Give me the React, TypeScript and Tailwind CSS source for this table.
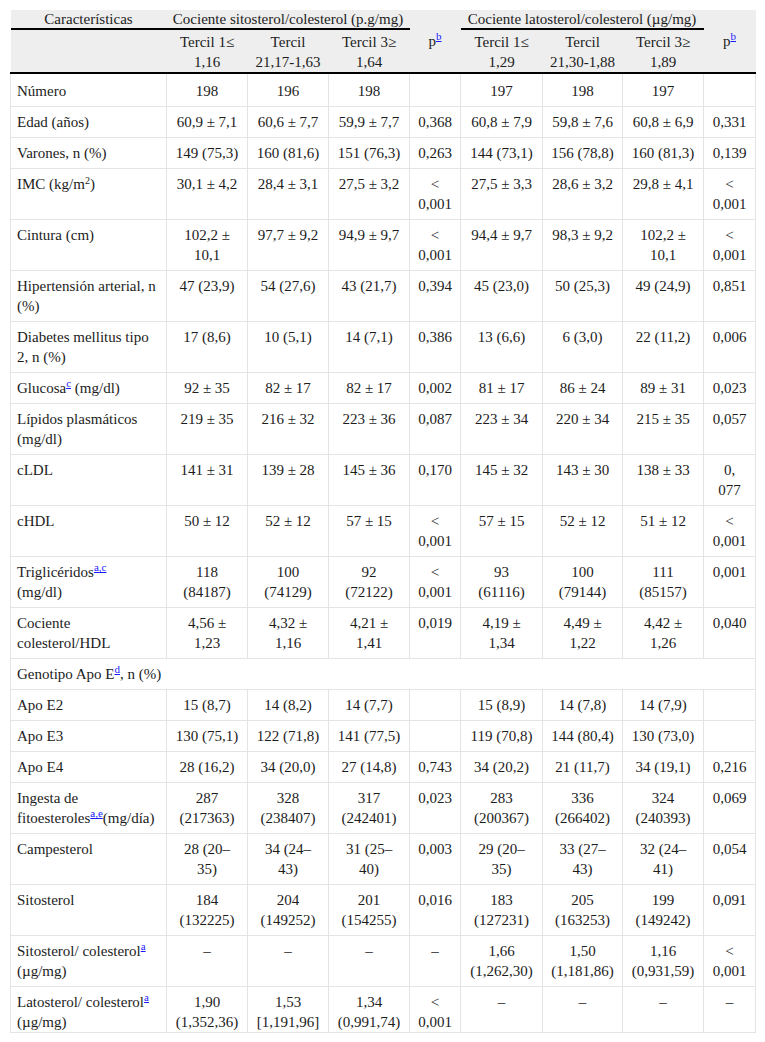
import React from 'react';

type Row = {
  label: React.ReactNode;
  cells?: string[];
  span?: boolean;
};

function Ref({ children }: { children: React.ReactNode }) {
  return (
    <sup>
      <a href="#" className="text-[#1a1aff] underline text-[11px]">
        {children}
      </a>
    </sup>
  );
}

const rows: Row[] = [
  { label: 'Número', cells: ['198', '196', '198', '', '197', '198', '197', ''] },
  { label: 'Edad (años)', cells: ['60,9 ± 7,1', '60,6 ± 7,7', '59,9 ± 7,7', '0,368', '60,8 ± 7,9', '59,8 ± 7,6', '60,8 ± 6,9', '0,331'] },
  { label: 'Varones, n (%)', cells: ['149 (75,3)', '160 (81,6)', '151 (76,3)', '0,263', '144 (73,1)', '156 (78,8)', '160 (81,3)', '0,139'] },
  {
    label: (
      <>
        IMC (kg/m<sup className="text-[10px]">2</sup>)
      </>
    ),
    cells: ['30,1 ± 4,2', '28,4 ± 3,1', '27,5 ± 3,2', '<\n0,001', '27,5 ± 3,3', '28,6 ± 3,2', '29,8 ± 4,1', '<\n0,001'],
  },
  { label: 'Cintura (cm)', cells: ['102,2 ±\n10,1', '97,7 ± 9,2', '94,9 ± 9,7', '<\n0,001', '94,4 ± 9,7', '98,3 ± 9,2', '102,2 ±\n10,1', '<\n0,001'] },
  { label: 'Hipertensión arterial, n\n(%)', cells: ['47 (23,9)', '54 (27,6)', '43 (21,7)', '0,394', '45 (23,0)', '50 (25,3)', '49 (24,9)', '0,851'] },
  { label: 'Diabetes mellitus tipo\n2, n (%)', cells: ['17 (8,6)', '10 (5,1)', '14 (7,1)', '0,386', '13 (6,6)', '6 (3,0)', '22 (11,2)', '0,006'] },
  {
    label: (
      <>
        Glucosa<Ref>c</Ref> (mg/dl)
      </>
    ),
    cells: ['92 ± 35', '82 ± 17', '82 ± 17', '0,002', '81 ± 17', '86 ± 24', '89 ± 31', '0,023'],
  },
  { label: 'Lípidos plasmáticos\n(mg/dl)', cells: ['219 ± 35', '216 ± 32', '223 ± 36', '0,087', '223 ± 34', '220 ± 34', '215 ± 35', '0,057'] },
  { label: 'cLDL', cells: ['141 ± 31', '139 ± 28', '145 ± 36', '0,170', '145 ± 32', '143 ± 30', '138 ± 33', '0,\n077'] },
  { label: 'cHDL', cells: ['50 ± 12', '52 ± 12', '57 ± 15', '<\n0,001', '57 ± 15', '52 ± 12', '51 ± 12', '<\n0,001'] },
  {
    label: (
      <>
        Triglicéridos<Ref>a,c</Ref>
        {'\n'}(mg/dl)
      </>
    ),
    cells: ['118\n(84187)', '100\n(74129)', '92\n(72122)', '<\n0,001', '93\n(61116)', '100\n(79144)', '111\n(85157)', '0,001'],
  },
  { label: 'Cociente\ncolesterol/HDL', cells: ['4,56 ±\n1,23', '4,32 ±\n1,16', '4,21 ±\n1,41', '0,019', '4,19 ±\n1,34', '4,49 ±\n1,22', '4,42 ±\n1,26', '0,040'] },
  {
    label: (
      <>
        Genotipo Apo E<Ref>d</Ref>, n (%)
      </>
    ),
    span: true,
  },
  { label: 'Apo E2', cells: ['15 (8,7)', '14 (8,2)', '14 (7,7)', '', '15 (8,9)', '14 (7,8)', '14 (7,9)', ''] },
  { label: 'Apo E3', cells: ['130 (75,1)', '122 (71,8)', '141 (77,5)', '', '119 (70,8)', '144 (80,4)', '130 (73,0)', ''] },
  { label: 'Apo E4', cells: ['28 (16,2)', '34 (20,0)', '27 (14,8)', '0,743', '34 (20,2)', '21 (11,7)', '34 (19,1)', '0,216'] },
  {
    label: (
      <>
        Ingesta de{'\n'}fitoesteroles<Ref>a,e</Ref>(mg/día)
      </>
    ),
    cells: ['287\n(217363)', '328\n(238407)', '317\n(242401)', '0,023', '283\n(200367)', '336\n(266402)', '324\n(240393)', '0,069'],
  },
  { label: 'Campesterol', cells: ['28 (20–\n35)', '34 (24–\n43)', '31 (25–\n40)', '0,003', '29 (20–\n35)', '33 (27–\n43)', '32 (24–\n41)', '0,054'] },
  { label: 'Sitosterol', cells: ['184\n(132225)', '204\n(149252)', '201\n(154255)', '0,016', '183\n(127231)', '205\n(163253)', '199\n(149242)', '0,091'] },
  {
    label: (
      <>
        Sitosterol/ colesterol<Ref>a</Ref>
        {'\n'}(µg/mg)
      </>
    ),
    cells: ['–', '–', '–', '–', '1,66\n(1,262,30)', '1,50\n(1,181,86)', '1,16\n(0,931,59)', '<\n0,001'],
  },
  {
    label: (
      <>
        Latosterol/ colesterol<Ref>a</Ref>
        {'\n'}(µg/mg)
      </>
    ),
    cells: ['1,90\n(1,352,36)', '1,53\n[1,191,96]', '1,34\n(0,991,74)', '<\n0,001', '–', '–', '–', '–'],
  },
];

const terciles = ['Tercil 1≤\n1,16', 'Tercil\n21,17-1,63', 'Tercil 3≥\n1,64'];
const terciles2 = ['Tercil 1≤\n1,29', 'Tercil\n21,30-1,88', 'Tercil 3≥\n1,89'];

export default function App() {
  const thBase = "bg-[#eeeeee] font-normal text-center border-b-2 border-b-black whitespace-pre font-['Liberation_Serif']";
  const tdBase = "border border-[#e4e4e4] whitespace-pre align-top font-['Liberation_Serif']";

  return (
    <div className="p-[10px] bg-white text-[#1c1c1c] font-['Liberation_Serif'] text-[15px] leading-5">
      <table className="w-[745px] table-fixed border-collapse font-['Liberation_Serif']">
        <colgroup>
          <col className="w-[156px]" />
          <col className="w-[81px]" />
          <col className="w-[81px]" />
          <col className="w-[81px]" />
          <col className="w-[51px]" />
          <col className="w-[82px]" />
          <col className="w-[80px]" />
          <col className="w-[81px]" />
          <col className="w-[52px]" />
        </colgroup>
        <thead>
          <tr>
            <th className={`${thBase} leading-[18px] pt-0`}>Características</th>
            <th colSpan={3} className={`${thBase} leading-[18px] pt-0`}>
              Cociente sitosterol/colesterol (p.g/mg)
            </th>
            <th rowSpan={2} className={`${thBase} align-middle`}>
              p<Ref>b</Ref>
            </th>
            <th colSpan={3} className={`${thBase} leading-[18px] pt-0`}>
              Cociente latosterol/colesterol (µg/mg)
            </th>
            <th rowSpan={2} className={`${thBase} align-middle`}>
              p<Ref>b</Ref>
            </th>
          </tr>
          <tr>
            <th className={thBase}></th>
            {terciles.map((t, i) => (
              <th key={i} className={`${thBase} pt-[2px] align-top`}>
                {t}
              </th>
            ))}
            {terciles2.map((t, i) => (
              <th key={i} className={`${thBase} pt-[2px] align-top`}>
                {t}
              </th>
            ))}
          </tr>
        </thead>
        <tbody>
          {rows.map((row, ri) => {
            const pad =
              ri === 0 ? 'pt-[7px] pb-[5px]' : ri === rows.length - 1 ? 'pt-[5px] pb-0' : 'py-[5px]';
            if (row.span) {
              return (
                <tr key={ri}>
                  <td colSpan={9} className={`${tdBase} px-[6px] ${pad}`}>
                    {row.label}
                  </td>
                </tr>
              );
            }
            return (
              <tr key={ri}>
                <td className={`${tdBase} px-[6px] ${pad} text-left`}>{row.label}</td>
                {row.cells!.map((c, ci) => (
                  <td key={ci} className={`${tdBase} px-[4px] ${pad} text-center`}>
                    {c}
                  </td>
                ))}
              </tr>
            );
          })}
        </tbody>
      </table>
    </div>
  );
}
